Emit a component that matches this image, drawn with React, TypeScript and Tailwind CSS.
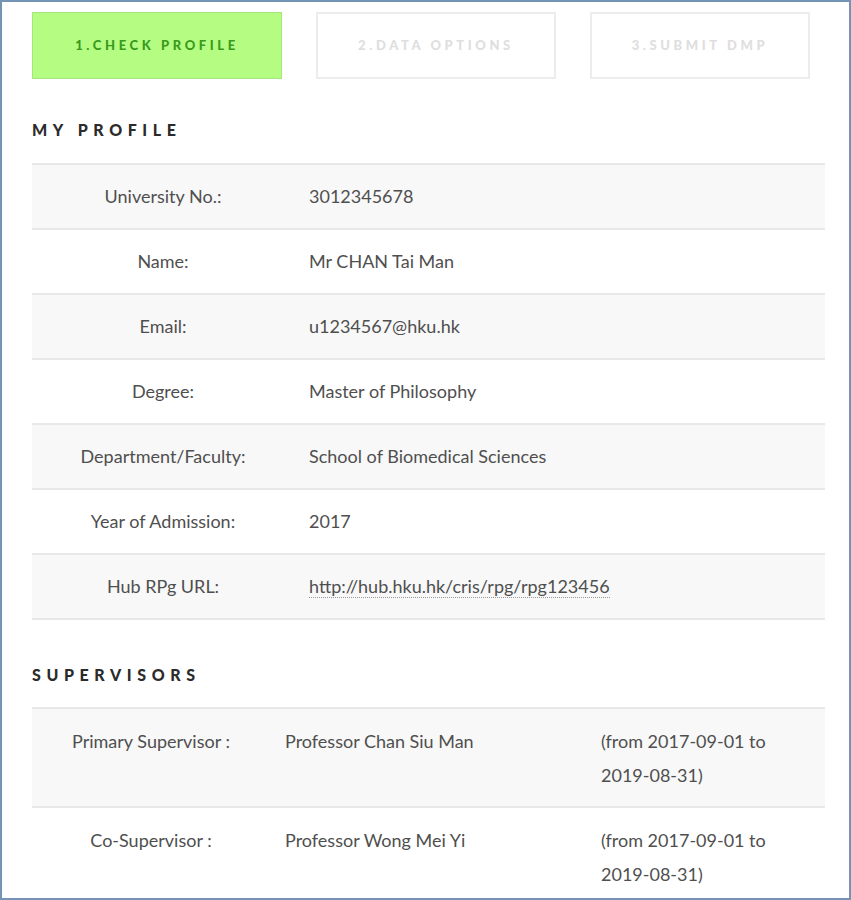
const profile: [string, string][] = [
  ["University No.:", "3012345678"],
  ["Name:", "Mr CHAN Tai Man"],
  ["Email:", "u1234567@hku.hk"],
  ["Degree:", "Master of Philosophy"],
  ["Department/Faculty:", "School of Biomedical Sciences"],
  ["Year of Admission:", "2017"],
  ["Hub RPg URL:", "http://hub.hku.hk/cris/rpg/rpg123456"],
];

const supervisors: [string, string, string][] = [
  ["Primary Supervisor :", "Professor Chan Siu Man", "(from 2017-09-01 to 2019-08-31)"],
  ["Co-Supervisor :", "Professor Wong Mei Yi", "(from 2017-09-01 to 2019-08-31)"],
];

const heading = "font-['Lato',sans-serif] font-black text-[16px] tracking-[5.6px] text-[#2b2b2b]";
const tab = "h-[67px] flex items-center justify-center text-[13px] font-black tracking-[3.6px]";

const App = () => {
  return (
    <div className="w-[851px] h-[900px] overflow-hidden bg-white border-2 border-[#7593b5] font-['Lato',sans-serif] text-[#4f4f4f]">
      <div className="flex gap-[34px] pl-[30px] pt-[10px]">
        <div className={`${tab} w-[250px] bg-[#b4fd82] border border-[#a6e67c] text-[#3a9a1c]`}>
          1.CHECK PROFILE
        </div>
        <div className={`${tab} w-[240px] border-2 border-[#ececec] text-[#dedede]`}>
          2.DATA OPTIONS
        </div>
        <div className={`${tab} w-[220px] border-2 border-[#ececec] text-[#dedede]`}>
          3.SUBMIT DMP
        </div>
      </div>

      <h2 className={`${heading} pl-[30px] mt-[41px] leading-[20px]`}>MY PROFILE</h2>

      <div className="ml-[30px] w-[793px] mt-[23px] border-t-2 border-[#e8e8e8]">
        {profile.map(([k, v], i) => (
          <div
            key={k}
            className={`flex items-center h-[65px] border-b-2 border-[#e8e8e8] text-[18px] ${i % 2 === 0 ? "bg-[#f8f8f8]" : "bg-white"}`}
          >
            <div className="w-[262px] text-center">{k}</div>
            <div className="pl-[15px]">
              {k === "Hub RPg URL:" ? (
                <span className="border-b border-dotted border-[#999]">{v}</span>
              ) : (
                v
              )}
            </div>
          </div>
        ))}
      </div>

      <h2 className={`${heading} pl-[30px] mt-[45px] leading-[20px]`}>SUPERVISORS</h2>

      <div className="ml-[30px] w-[793px] mt-[22px] border-t-2 border-[#e8e8e8]">
        {supervisors.map(([k, n, d], i) => (
          <div
            key={k}
            className={`flex pt-[15px] pb-[14px] border-b-2 border-[#e8e8e8] text-[18px] leading-[34px] ${i % 2 === 0 ? "bg-[#f8f8f8]" : "bg-white"}`}
          >
            <div className="w-[238px] text-center">{k}</div>
            <div className="w-[316px] pl-[15px]">{n}</div>
            <div className="w-[175px] pl-[15px] box-content">{d}</div>
          </div>
        ))}
      </div>
    </div>
  );
};

export default App;
